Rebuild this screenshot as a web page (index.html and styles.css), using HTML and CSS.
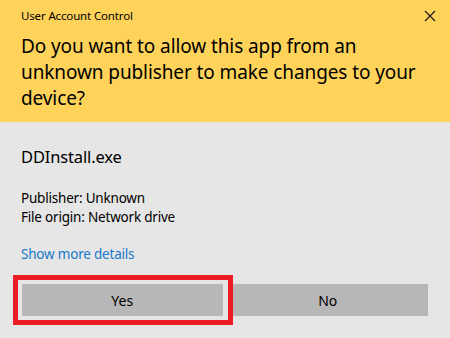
FILE: index.html
```html
<!DOCTYPE html>
<html lang="en">
<head>
    <meta charset="UTF-8">
    <title>User Account Control</title>
    <link rel="stylesheet" href="styles.css">
</head>
<body>
    <div class="dialog">
        <div class="header">
            <div class="title-row">
                <span class="title">User Account Control</span>
                <svg class="close" width="12" height="12" viewBox="0 0 12 12">
                    <path d="M1 1 L11 11 M11 1 L1 11" stroke="#1a1a1a" stroke-width="1.2" fill="none"/>
                </svg>
            </div>
            <h1 class="question">Do you want to allow this app from an unknown publisher to make changes to your device?</h1>
        </div>

        <div class="content">
            <div class="app-name">DDInstall.exe</div>
            <div class="details">
                <div>Publisher: Unknown</div>
                <div>File origin: Network drive</div>
            </div>
            <a class="more" href="#">Show more details</a>

            <div class="buttons">
                <button class="btn">Yes</button>
                <button class="btn">No</button>
                <!-- red highlight around the Yes button -->
                <div class="highlight"></div>
            </div>
        </div>
    </div>
</body>
</html>
```

FILE: styles.css
```css
body {
    margin: 0;
    padding: 0;
    font-family: "Noto Sans", "Open Sans", sans-serif;
    color: #000;
    background: #e6e6e6;
}

.dialog {
    width: 450px;
    height: 338px;
    background: #e6e6e6;
}

.header {
    background: #ffd35a;
    height: 122px;
    box-sizing: border-box;
    padding: 4px 14px 0 21px;
}

.title-row {
    display: flex;
    justify-content: space-between;
    align-items: center;
    height: 22px;
}

.title {
    font-size: 11.5px;
    letter-spacing: -0.15px;
}

.close {
    margin-top: 2px;
}

.question {
    margin: 7px 0 0 0;
    font-size: 19px;
    font-weight: normal;
    line-height: 26px;
    letter-spacing: -0.1px;
}

.content {
    padding: 24px 22px 0 21px;
}

.app-name {
    font-size: 16.5px;
    line-height: 22px;
    letter-spacing: -0.15px;
}

.details {
    margin-top: 21px;
    font-size: 13.5px;
    line-height: 18.5px;
    letter-spacing: -0.2px;
}

.more {
    display: block;
    margin-top: 19px;
    font-size: 13.5px;
    line-height: 18px;
    letter-spacing: -0.2px;
    color: #1979ca;
    text-decoration: none;
}

.buttons {
    position: relative;
    display: flex;
    gap: 5px;
    margin-top: 21px;
    margin-left: 1px;
}

.btn {
    flex: 1;
    height: 32px;
    border: none;
    background: #b7b7b7;
    font-family: inherit;
    font-size: 14px;
    color: #000;
    padding: 0;
}

.highlight {
    position: absolute;
    left: -9px;
    top: -9px;
    width: 210px;
    height: 40px;
    border: 5px solid #ed1c24;
}
```
